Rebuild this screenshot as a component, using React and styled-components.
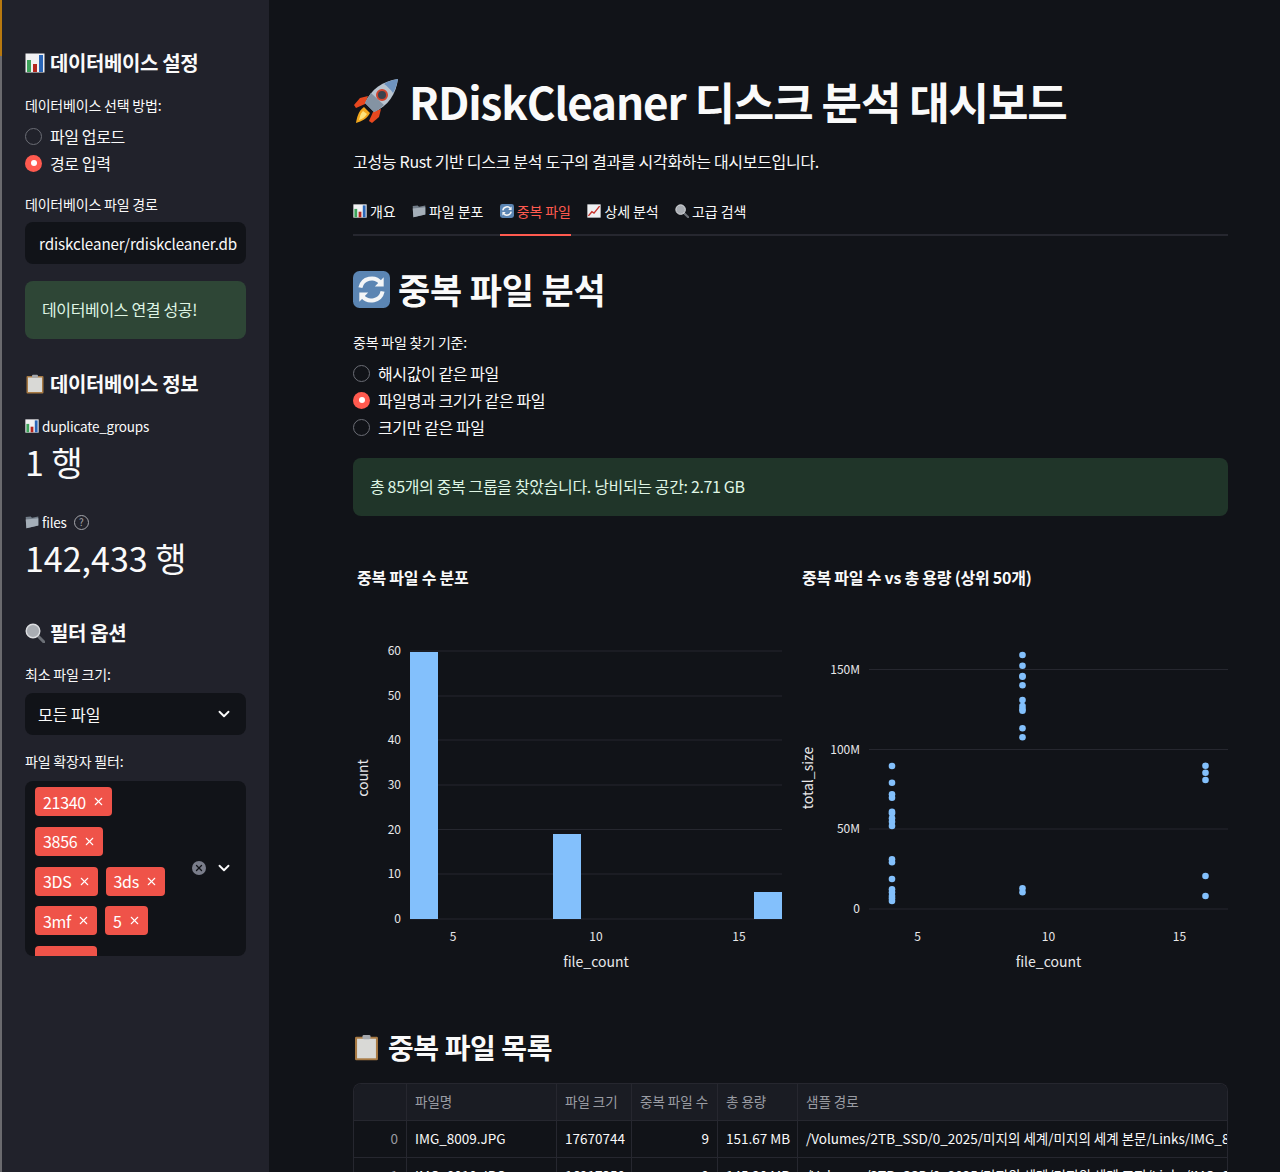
import React from "react";
import styled, { createGlobalStyle } from "styled-components";
import { ChevronDown, X } from "lucide-react";

const GlobalStyle = createGlobalStyle`
    html, body {
        margin: 0;
        padding: 0;
        background: #111318;
    }
    * {
        box-sizing: border-box;
    }
    body {
        font-family: "Noto Sans CJK KR", "Noto Sans", sans-serif;
        color: #fafafa;
    }
`;

const Page = styled.div`
    display: flex;
    width: 1280px;
    height: 1172px;
    overflow: hidden;
`;
const EdgeStrip = styled.div`
    flex: 0 0 2px;
    background: linear-gradient(to bottom, #b8790f 0, #b8790f 56px, #6a6a6e 56px);
`;

/* sidebar */
const Sidebar = styled.aside`
    flex: 0 0 267px;
    min-width: 0;
    background: #21222b;
    padding: 48px 23px 0 23px;
`;
const SideHeading = styled.h2`
    display: flex;
    align-items: center;
    gap: 5px;
    margin: ${p => p.$top || 0}px 0 0 0;
    height: 30px;
    font-size: 20px;
    font-weight: 600;
    letter-spacing: -0.4px;
    line-height: 30px;
`;
const FieldLabel = styled.div`
    margin-top: ${p => p.$top || 0}px;
    height: 20px;
    font-size: 14px;
    letter-spacing: -0.2px;
    line-height: 20px;
    color: #fafafa;
`;
const RadioList = styled.div`
    display: flex;
    flex-direction: column;
    gap: 7px;
    margin-top: 11px;
`;
const RadioRow = styled.div`
    display: flex;
    align-items: center;
    gap: 8px;
    height: 20px;
    font-size: 16px;
    letter-spacing: -0.4px;
    line-height: 20px;
`;
const RadioDot = styled.span`
    flex: 0 0 17px;
    height: 17px;
    border-radius: 50%;
    background: ${p => (p.$on ? "#ff5a4f" : "transparent")};
    border: ${p => (p.$on ? "none" : "1px solid #6b6d75")};
    display: flex;
    align-items: center;
    justify-content: center;
    &::after {
        content: "";
        display: ${p => (p.$on ? "block" : "none")};
        width: 6px;
        height: 6px;
        border-radius: 50%;
        background: #fff;
    }
`;
const TextInput = styled.div`
    margin-top: 8px;
    height: 42px;
    background: #111318;
    border-radius: 8px;
    padding: 0 9px 0 14px;
    font-size: 15.2px;
    letter-spacing: -0.1px;
    line-height: 42px;
    white-space: nowrap;
    overflow: hidden;
`;
const SuccessBox = styled.div`
    margin-top: ${p => p.$top || 0}px;
    height: 58px;
    background: ${p => p.$bg};
    border-radius: 8px;
    padding: 0 17px;
    font-size: 16px;
    letter-spacing: -0.35px;
    line-height: 57px;
    color: #dff5e4;
`;
const MetricLabel = styled.div`
    display: flex;
    align-items: center;
    gap: 3px;
    margin-top: ${p => p.$top || 0}px;
    height: 20px;
    font-size: 13.5px;
    letter-spacing: -0.2px;
    line-height: 20px;
`;
const MetricValue = styled.div`
    height: 50px;
    margin-top: 1px;
    font-size: 34px;
    line-height: 50px;
`;
const HelpMark = styled.span`
    display: inline-flex;
    align-items: center;
    justify-content: center;
    width: 15px;
    height: 15px;
    margin-left: 4px;
    border: 1px solid #a5a6ab;
    border-radius: 50%;
    font-size: 10px;
    line-height: 1;
    color: #a5a6ab;
`;
const SelectBox = styled.div`
    display: flex;
    align-items: center;
    justify-content: space-between;
    margin-top: 9px;
    height: 42px;
    background: #111318;
    border-radius: 8px;
    padding: 0 13px;
    font-size: 16px;
`;
const MultiBox = styled.div`
    position: relative;
    margin-top: 10px;
    height: 175px;
    background: #111318;
    border-radius: 8px;
    padding: 6px 0 0 10px;
    overflow: hidden;
`;
const TagWrap = styled.div`
    display: flex;
    flex-wrap: wrap;
    align-content: flex-start;
    gap: 10.75px 8px;
    width: 135px;
`;
const Tag = styled.span`
    display: inline-flex;
    align-items: center;
    gap: 6px;
    height: 29px;
    padding: 0 7px 0 8px;
    background: #ef5349;
    border-radius: 4px;
    font-size: 16px;
    letter-spacing: -0.3px;
    color: #fff;
`;
const MultiControls = styled.div`
    position: absolute;
    right: 13px;
    top: 78px;
    display: flex;
    align-items: center;
    gap: 9px;
`;
const ClearMark = styled.span`
    display: flex;
    align-items: center;
    justify-content: center;
    width: 14px;
    height: 14px;
    border-radius: 50%;
    background: #7a7d8a;
    color: #111318;
`;

/* main column */
const Main = styled.main`
    flex: 1;
    min-width: 0;
    padding: 66px 52px 0 84px;
    background: #111318;
`;
const Title = styled.h1`
    display: flex;
    align-items: center;
    gap: 10px;
    margin: 0;
    height: 70px;
    font-size: 44px;
    font-weight: 700;
    line-height: 70px;
    letter-spacing: -1.1px;
    white-space: nowrap;
`;
const Lead = styled.p`
    margin: 13px 0 0 0;
    height: 24px;
    font-size: 16px;
    letter-spacing: -0.3px;
    line-height: 24px;
`;
const TabBar = styled.div`
    display: flex;
    gap: 16.5px;
    margin-top: 16px;
    height: 47px;
    border-bottom: 2px solid #26272f;
`;
const Tab = styled.div`
    display: flex;
    align-items: center;
    gap: 3px;
    height: 47px;
    padding-bottom: 2px;
    font-size: 14px;
    letter-spacing: -0.1px;
    color: ${p => (p.$active ? "#ff5a4f" : "#fafafa")};
    border-bottom: 2px solid ${p => (p.$active ? "#ff5a4f" : "transparent")};
`;
const SectionHeading = styled.h2`
    display: flex;
    align-items: center;
    gap: 8px;
    margin: ${p => p.$top}px 0 0 0;
    height: 46px;
    font-size: ${p => p.$size}px;
    font-weight: 600;
    line-height: 46px;
    letter-spacing: ${p => p.$track}px;
`;
const ChartRow = styled.div`
    display: grid;
    grid-template-columns: 1fr 1fr;
    gap: 16px;
    margin-top: 49px;
`;
const ChartBox = styled.div`
    height: 425px;
`;
const ChartTitle = styled.div`
    height: 25px;
    padding-left: 4px;
    font-size: 16px;
    font-weight: 600;
    line-height: 24px;
    letter-spacing: -0.25px;
`;
const ChartSvg = styled.svg`
    display: block;
    font-family: "Noto Sans CJK KR", "Noto Sans", sans-serif;
`;
const AxisTick = styled.text`
    font-size: 12px;
    fill: #e8e8ea;
`;
const AxisTitle = styled.text`
    font-size: 14px;
    fill: #e8e8ea;
`;
const Table = styled.div`
    margin-top: 13px;
    border: 1px solid #26272f;
    border-bottom: none;
    border-radius: 8px 8px 0 0;
    overflow: hidden;
    font-size: 13.5px;
`;
const TableRow = styled.div`
    display: grid;
    grid-template-columns: 53px 150px 75px 86px 80px 1fr;
    height: 37px;
    background: ${p => (p.$head ? "#1a1c23" : "#111318")};
    border-bottom: 1px solid #26272f;
`;
const Cell = styled.div`
    padding: 0 8px;
    line-height: 35px;
    white-space: nowrap;
    overflow: hidden;
    text-align: ${p => (p.$right ? "right" : "left")};
    color: ${p => (p.$dim ? "#9a9ca3" : "#fafafa")};
    border-right: ${p => (p.$last ? "none" : "1px solid #26272f")};
`;

/* emoji drawn as small pictures */
const BarsEmoji = ({ size = 20 }) => (
    <svg width={size} height={size} viewBox="0 0 20 20">
        <rect x="0.5" y="0.5" width="19" height="19" fill="#f1f1f3" />
        <rect x="2" y="7" width="4" height="12" fill="#3da35a" />
        <rect x="8" y="11" width="4" height="8" fill="#b3261e" />
        <rect x="14" y="2" width="4" height="17" fill="#2a66b8" />
    </svg>
);
const FolderEmoji = ({ size = 20 }) => (
    <svg width={size} height={size} viewBox="0 0 20 20">
        <path d="M1 3 L8 2 L10 4 L19 2 L19 15 L2 19 Z" fill="#717c88" />
        <path d="M1 6.5 L19 4.5 L19 15 L2 19 Z" fill="#a4aeb8" />
    </svg>
);
const ClipboardEmoji = ({ size = 20 }) => (
    <svg width={size} height={size} viewBox="0 0 20 20">
        <rect x="1.5" y="2" width="17" height="17.5" rx="1" fill="#a87a44" />
        <rect x="3" y="3.5" width="14" height="14.5" fill="#d9d9d6" />
        <rect x="7" y="0.8" width="6" height="3" rx="1" fill="#a5a8ad" />
    </svg>
);
const SearchEmoji = ({ size = 20 }) => (
    <svg width={size} height={size} viewBox="0 0 20 20">
        <line x1="12" y1="12" x2="19" y2="19" stroke="#6b6f76" strokeWidth="3" strokeLinecap="round" />
        <circle cx="8" cy="8" r="6.8" fill="#a9adb3" stroke="#dcdee1" strokeWidth="1.4" />
    </svg>
);
const CycleEmoji = ({ size = 20 }) => (
    <svg width={size} height={size} viewBox="0 0 20 20">
        <rect width="20" height="20" rx="3.5" fill="#5b85b3" />
        <path d="M4 9 A6.2 6.2 0 0 1 15 6.5" fill="none" stroke="#f3f5f7" strokeWidth="2.2" />
        <path d="M16.6 3.4 V8.4 H11.8 Z" fill="#f3f5f7" />
        <path d="M16 11 A6.2 6.2 0 0 1 5 13.5" fill="none" stroke="#f3f5f7" strokeWidth="2.2" />
        <path d="M3.4 16.6 V11.6 H8.2 Z" fill="#f3f5f7" />
    </svg>
);
const TrendEmoji = ({ size = 20 }) => (
    <svg width={size} height={size} viewBox="0 0 20 20">
        <rect x="0.5" y="0.5" width="19" height="19" fill="#eef0f2" />
        <path d="M2 17 L7 11 L10 13 L18 3" fill="none" stroke="#c8322b" strokeWidth="2" />
    </svg>
);
const RocketEmoji = () => (
    <svg width="46" height="46" viewBox="0 0 46 46">
        <path d="M12 26 L3 30 L1 27 L7 20 L15 18 Z" fill="#e8481f" />
        <path d="M20 34 L16 43 L19 45 L26 39 L28 31 Z" fill="#e8481f" />
        <path d="M11 29 C5 33 4 40 3 45 C9 43 14 41 17 35 Z" fill="#f2a81d" />
        <path d="M10 33 C7 36 7 39 6 42 C10 41 12 39 14 36 Z" fill="#fbe27a" />
        <path d="M12 25 C18 11 30 3 45 1 C43 16 35 28 21 34 Z" fill="#b9c4cf" />
        <path d="M45 1 C38 2 34 4 31 6 C34 8 38 12 40 15 C43 10 44 6 45 1 Z" fill="#6e93bf" />
        <path d="M12 25 C14 21 16 18 18 15 L31 27 C28 30 25 32 21 34 Z" fill="#8493a3" />
        <circle cx="29" cy="17" r="5" fill="#39424d" stroke="#d2452e" strokeWidth="2" />
    </svg>
);

const scatterGroups = [
    { x: 94, ys: [206, 222.7, 234.3, 237.7, 251.7, 253.3, 258.3, 261.7, 266, 299.3, 302.3, 319, 329.3, 332.3, 336, 338.3, 341] },
    { x: 224.5, ys: [95, 105.7, 116, 116.7, 125.3, 140, 146, 149, 150.7, 168.3, 177.3, 328.3, 332.3] },
    { x: 407.5, ys: [205.7, 212.7, 220, 316, 336] },
];

const HistogramChart = () => {
    const gridY = [91, 136, 180, 225, 269.5, 314, 359];
    const labels = ["60", "50", "40", "30", "20", "10", "0"];
    return (
        <ChartSvg width="429" height="390" viewBox="0 30 429 390">
            {gridY.map(y => <line key={y} x1="57" x2="429" y1={y} y2={y} stroke="#26272f" strokeWidth="1" />)}
            {labels.map((t, i) => (
                <AxisTick key={t} x="48" y={gridY[i] + 4} textAnchor="end">{t}</AxisTick>
            ))}
            <rect x="57" y="92" width="28" height="267" fill="#83c0fc" />
            <rect x="200" y="274" width="28" height="85" fill="#83c0fc" />
            <rect x="401" y="332" width="28" height="27" fill="#83c0fc" />
            {[["5", 100], ["10", 243], ["15", 386]].map(([t, x]) => (
                <AxisTick key={t} x={x} y="381" textAnchor="middle">{t}</AxisTick>
            ))}
            <AxisTitle x="243" y="407" textAnchor="middle">file_count</AxisTitle>
            <AxisTitle transform="translate(15 218) rotate(-90)" textAnchor="middle">count</AxisTitle>
        </ChartSvg>
    );
};

const ScatterChart = () => {
    const gridY = [109.5, 189.5, 269, 349];
    const labels = ["150M", "100M", "50M", "0"];
    return (
        <ChartSvg width="430" height="390" viewBox="0 30 430 390">
            {gridY.map(y => <line key={y} x1="71" x2="430" y1={y} y2={y} stroke="#26272f" strokeWidth="1" />)}
            {labels.map((t, i) => (
                <AxisTick key={t} x="62" y={gridY[i] + 4} textAnchor="end">{t}</AxisTick>
            ))}
            {scatterGroups.map(g => g.ys.map(y => (
                <circle key={`${g.x}-${y}`} cx={g.x} cy={y} r="3.3" fill="#83c0fc" />
            )))}
            {[["5", 119.5], ["10", 250.5], ["15", 381.5]].map(([t, x]) => (
                <AxisTick key={t} x={x} y="381" textAnchor="middle">{t}</AxisTick>
            ))}
            <AxisTitle x="250.5" y="407" textAnchor="middle">file_count</AxisTitle>
            <AxisTitle transform="translate(15 218) rotate(-90)" textAnchor="middle">total_size</AxisTitle>
        </ChartSvg>
    );
};

const tags = ["21340", "3856", "3DS", "3ds", "3mf", "5", "AAC"];

const rows = [
    ["0", "IMG_8009.JPG", "17670744", "9", "151.67 MB", "/Volumes/2TB_SSD/0_2025/미지의 세계/미지의 세계 본문/Links/IMG_8009.JPG"],
    ["1", "IMG_8010.JPG", "16917350", "9", "145.20 MB", "/Volumes/2TB_SSD/0_2025/미지의 세계/미지의 세계 표지/Links/IMG_8010.JPG"],
];

const App = () => (
    <Page>
        <GlobalStyle />
        <EdgeStrip />
        <Sidebar>
            <SideHeading><BarsEmoji />데이터베이스 설정</SideHeading>
            <FieldLabel $top={17}>데이터베이스 선택 방법:</FieldLabel>
            <RadioList>
                <RadioRow><RadioDot />파일 업로드</RadioRow>
                <RadioRow><RadioDot $on />경로 입력</RadioRow>
            </RadioList>
            <FieldLabel $top={21}>데이터베이스 파일 경로</FieldLabel>
            <TextInput>rdiskcleaner/rdiskcleaner.db</TextInput>
            <SuccessBox $top={17} $bg="#2e4636">데이터베이스 연결 성공!</SuccessBox>

            <SideHeading $top={30}><ClipboardEmoji />데이터베이스 정보</SideHeading>
            <MetricLabel $top={17}><BarsEmoji size={14} />duplicate_groups</MetricLabel>
            <MetricValue>1 행</MetricValue>
            <MetricLabel $top={25}><FolderEmoji size={14} />files<HelpMark>?</HelpMark></MetricLabel>
            <MetricValue>142,433 행</MetricValue>

            <SideHeading $top={35}><SearchEmoji />필터 옵션</SideHeading>
            <FieldLabel $top={16}>최소 파일 크기:</FieldLabel>
            <SelectBox>모든 파일<ChevronDown size={18} strokeWidth={2.5} /></SelectBox>
            <FieldLabel $top={16}>파일 확장자 필터:</FieldLabel>
            <MultiBox>
                <TagWrap>
                    {tags.map(t => <Tag key={t}>{t}<X size={13} strokeWidth={2} /></Tag>)}
                </TagWrap>
                <MultiControls>
                    <ClearMark><X size={10} strokeWidth={3} /></ClearMark>
                    <ChevronDown size={18} strokeWidth={2.5} />
                </MultiControls>
            </MultiBox>
        </Sidebar>

        <Main>
            <Title><RocketEmoji />RDiskCleaner 디스크 분석 대시보드</Title>
            <Lead>고성능 Rust 기반 디스크 분석 도구의 결과를 시각화하는 대시보드입니다.</Lead>
            <TabBar>
                <Tab><BarsEmoji size={14} />개요</Tab>
                <Tab><FolderEmoji size={14} />파일 분포</Tab>
                <Tab $active><CycleEmoji size={14} />중복 파일</Tab>
                <Tab><TrendEmoji size={14} />상세 분석</Tab>
                <Tab><SearchEmoji size={14} />고급 검색</Tab>
            </TabBar>

            <SectionHeading $top={30} $size={35} $track={-0.2}><CycleEmoji size={37} />중복 파일 분석</SectionHeading>
            <FieldLabel $top={20}>중복 파일 찾기 기준:</FieldLabel>
            <RadioList>
                <RadioRow><RadioDot />해시값이 같은 파일</RadioRow>
                <RadioRow><RadioDot $on />파일명과 크기가 같은 파일</RadioRow>
                <RadioRow><RadioDot />크기만 같은 파일</RadioRow>
            </RadioList>
            <SuccessBox $top={21} $bg="#203529">총 85개의 중복 그룹을 찾았습니다. 낭비되는 공간: 2.71 GB</SuccessBox>

            <ChartRow>
                <ChartBox>
                    <ChartTitle>중복 파일 수 분포</ChartTitle>
                    <HistogramChart />
                </ChartBox>
                <ChartBox>
                    <ChartTitle>중복 파일 수 vs 총 용량 (상위 50개)</ChartTitle>
                    <ScatterChart />
                </ChartBox>
            </ChartRow>

            <SectionHeading $top={34} $size={28} $track={-0.4}><ClipboardEmoji size={27} />중복 파일 목록</SectionHeading>
            <Table>
                <TableRow $head>
                    <Cell $dim />
                    <Cell $dim>파일명</Cell>
                    <Cell $dim>파일 크기</Cell>
                    <Cell $dim>중복 파일 수</Cell>
                    <Cell $dim>총 용량</Cell>
                    <Cell $dim $last>샘플 경로</Cell>
                </TableRow>
                {rows.map(r => (
                    <TableRow key={r[0]}>
                        <Cell $dim $right>{r[0]}</Cell>
                        <Cell>{r[1]}</Cell>
                        <Cell>{r[2]}</Cell>
                        <Cell $right>{r[3]}</Cell>
                        <Cell>{r[4]}</Cell>
                        <Cell $last>{r[5]}</Cell>
                    </TableRow>
                ))}
            </Table>
        </Main>
    </Page>
);

export default App;
